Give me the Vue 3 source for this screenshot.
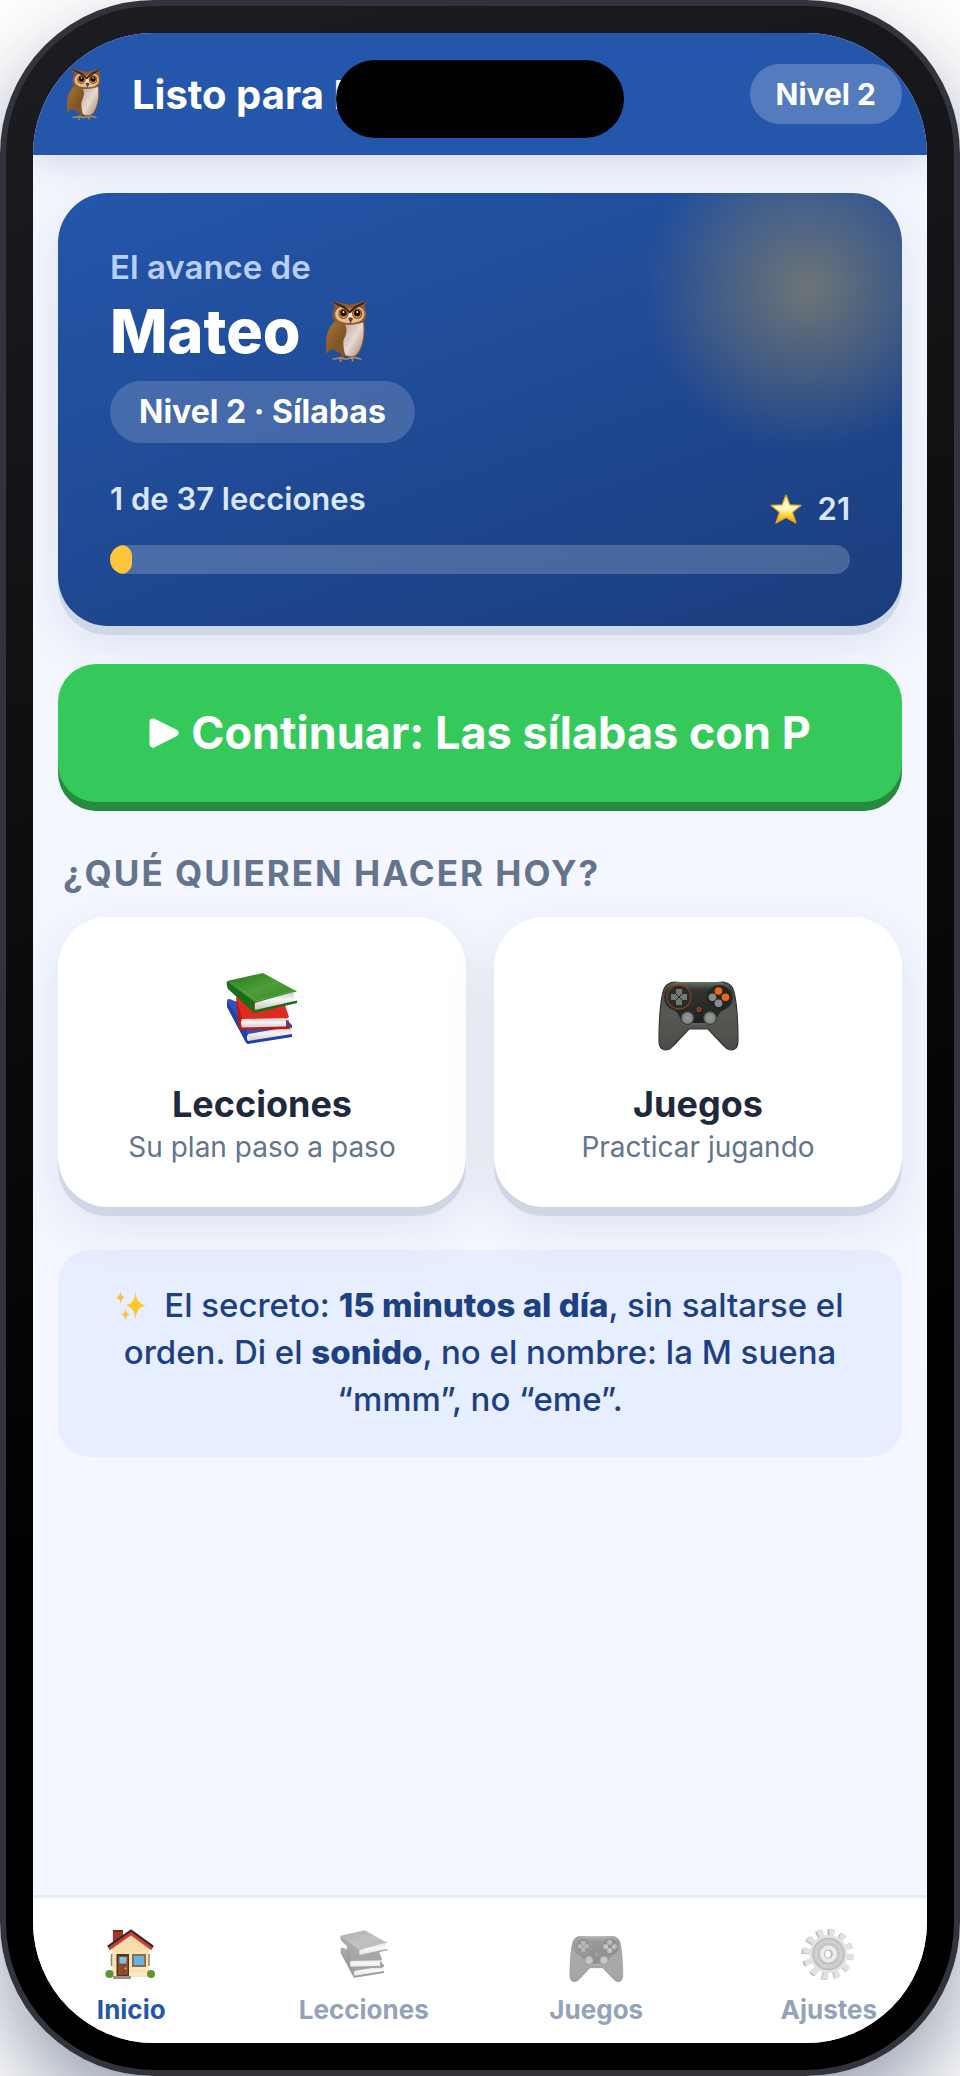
<script setup>
const lessonsDone = 1
const lessonsTotal = 37
const progress = Math.round((lessonsDone / lessonsTotal) * 100)

const tiles = [
  { icon: 'books', title: 'Lecciones', text: 'Su plan paso a paso' },
  { icon: 'gamepad', title: 'Juegos', text: 'Practicar jugando' },
]

const tabs = [
  { icon: 'house', label: 'Inicio', active: true },
  { icon: 'books', label: 'Lecciones', active: false },
  { icon: 'gamepad', label: 'Juegos', active: false },
  { icon: 'gear', label: 'Ajustes', active: false },
]
</script>

<template>
  <svg class="sprite" width="0" height="0" aria-hidden="true">
    <defs>
      <linearGradient id="wing" x1="0" y1="0" x2="1" y2="1">
        <stop offset="0" stop-color="#a87638" /><stop offset="1" stop-color="#6b421a" />
      </linearGradient>
      <linearGradient id="belly" x1="0" y1="0" x2="1" y2="1">
        <stop offset="0" stop-color="#b9a39a" /><stop offset=".5" stop-color="#e6dad4" /><stop offset="1" stop-color="#a98068" />
      </linearGradient>
      <linearGradient id="starFill" x1="0" y1="0" x2="0" y2="1">
        <stop offset="0" stop-color="#fff3b0" /><stop offset=".5" stop-color="#fffbd0" /><stop offset=".7" stop-color="#ffd83a" /><stop offset="1" stop-color="#f09a10" />
      </linearGradient>
      <linearGradient id="green" x1="0" y1="0" x2="1" y2="1">
        <stop offset="0" stop-color="#27791b" /><stop offset=".5" stop-color="#4d9d3a" /><stop offset="1" stop-color="#2f861f" />
      </linearGradient>
      <linearGradient id="pages" x1="0" y1="0" x2="0" y2="1">
        <stop offset="0" stop-color="#c9c9c9" /><stop offset=".4" stop-color="#f4f4f4" /><stop offset="1" stop-color="#c2c2c2" />
      </linearGradient>
      <linearGradient id="shell" x1="0" y1="0" x2="0" y2="1">
        <stop offset="0" stop-color="#4b4f4b" /><stop offset=".5" stop-color="#565853" /><stop offset="1" stop-color="#4c4d49" />
      </linearGradient>
      <linearGradient id="face" x1="0" y1="0" x2="0" y2="1">
        <stop offset="0" stop-color="#67706b" /><stop offset=".2" stop-color="#303330" /><stop offset="1" stop-color="#1f211f" />
      </linearGradient>
      <radialGradient id="stick">
        <stop offset="0" stop-color="#969b97" /><stop offset=".7" stop-color="#858a86" /><stop offset="1" stop-color="#5d625e" />
      </radialGradient>
      <linearGradient id="wall" x1="0" y1="0" x2="0" y2="1">
        <stop offset="0" stop-color="#f6d9a0" /><stop offset="1" stop-color="#fae8c2" />
      </linearGradient>
    </defs>

    <symbol id="owl" viewBox="0 0 36 52">
      <path d="M15 45V50M23 45V50" stroke="#7a5a38" stroke-width="2.500" />
      <path d="M7 49.500L13 48.500L17 49.500M18 49.500L24 48L30 49.500M13 48.500V51.500M23 48.500V51" fill="none" stroke="#a98a68" stroke-width="1.400" stroke-linecap="round" />
      <path d="M8 18C4 22 1 29 1 36V45L5 41L8 42L16 47C20 48 24 48 27 46C32 40 34 32 33 18Z" fill="#825728" />
      <path d="M17 20C16 28 14 38 17 46C20 48 24 47.500 27 45C32 38 33 28 32 19Z" fill="url(#belly)" />
      <path d="M8 18C3 23 1 29 1 36V45L4 41L7 42C13 38 18 32 18 25C18 19 12 16 8 18Z" fill="url(#wing)" />
      <path d="M5 1C11 2 17 3 20.500 4C25 3 30 2 35 1C34 4 33 5 33.500 7C36 13 34 19 28 20C20 22 10 21 7 16C5 12 7 8 8.500 6Z" fill="#8a5c36" />
      <path d="M20.500 8C17 3.500 10 5 8.500 11C8 17 14 20 21 19C28 20 33 17 33 11C32 5 25 4 20.500 8Z" fill="#e2bd94" />
      <path d="M15 5L20.500 10L27 5C24 8 24 13 24 15L21 18L18 15C18 11 17 7 15 5Z" fill="#f5e5d6" />
      <path d="M5 1C12 3 18 5 20.500 9C24 5 29 3 35 1C31 5 26 6 21.500 11H20C16 6 10 5 5 1Z" fill="#432416" />
      <circle cx="15.500" cy="11.500" r="4.300" fill="#7a3909" /><circle cx="27" cy="11.500" r="4.300" fill="#7a3909" />
      <circle cx="15.500" cy="11.500" r="3.600" fill="#e88b0d" /><circle cx="27" cy="11.500" r="3.600" fill="#e88b0d" />
      <circle cx="15.500" cy="11" r="2.700" fill="#0d0805" /><circle cx="27" cy="11" r="2.700" fill="#0d0805" />
      <circle cx="15.500" cy="10" r=".8" fill="#fff" /><circle cx="27" cy="10" r=".8" fill="#fff" />
      <path d="M19.300 15.500Q21.500 13.500 23.500 15.500L21.500 19.500Z" fill="#5d4337" />
    </symbol>

    <symbol id="star" viewBox="0 0 32 30">
      <path d="M16 1L19.800 10.800L31 11.400L22.500 18.300L26 29L16 23.500L6 29L9.500 18.300L1 11.400L12.200 10.800Z" fill="url(#starFill)" stroke="#e9a520" stroke-width="1.200" stroke-linejoin="round" />
    </symbol>

    <symbol id="sparkles" viewBox="0 0 30 30">
      <path d="M19.500 0Q20.200 13 30 14.500Q20.200 16 19.500 29Q18.800 16 9.500 14.500Q18.800 13 19.500 0Z" fill="#fbc92d" />
      <path d="M4.500 0Q5 5.700 9 6.500Q5 7.300 4.500 13Q4 7.300 0 6.500Q4 5.700 4.500 0Z" fill="#f9bb45" />
      <path d="M9.500 17Q10 22.700 14 23.500Q10 24.300 9.500 30Q9 24.300 5 23.500Q9 22.700 9.500 17Z" fill="#f9c345" />
    </symbol>

    <symbol id="books" viewBox="0 0 90 90">
      <g transform="translate(10 7)">
        <path d="M0 28Q2 26 5 28L60 48L65 53V56L21 64Z" fill="#3150c4" />
        <path d="M21 62L62 55L64 56V65L22 71Z" fill="url(#pages)" />
        <path d="M0 28L21 61Q19 66 21 69L65 62V65L21 72Q19 72 18 69L0 35Z" fill="#2140a8" />
        <path d="M9 25L58 33L62 45L59 47L14 48Z" fill="#e02a20" />
        <path d="M14 47L59 46V55L14 57Z" fill="url(#pages)" />
        <path d="M9 25L15 46Q13 51 15 55.500L60 54.500L61 46L63 57L14 58Q12 57 11 50Z" fill="#bd1913" />
        <path d="M0 9L36 1L70 19.500L28 31Z" fill="url(#green)" />
        <path d="M28 31L67 20V30L28 39Z" fill="url(#pages)" />
        <path d="M0 9L28 30Q26 35 28 38L70 28.500V31L28 41Q26 41 24 38L1 17Q-1 13 0 9Z" fill="#1c6d17" />
        <path d="M4 10L30 29L69 18" fill="none" stroke="#62ad4f" stroke-width=".6" />
      </g>
    </symbol>

    <symbol id="gamepad" viewBox="0 0 90 90">
      <g transform="translate(5 16)">
        <path d="M16 1Q40 4 65 1Q74 2 76 11C79 23 80 45 80 60Q80 68 74 69Q69 69 66 65L50 48H31L15 65Q12 69 7 69Q1 68 1 60C1 45 2 23 5 11Q7 2 16 1Z" fill="url(#shell)" stroke="#343633" stroke-width="1.200" />
        <path d="M18 1H63Q74 4 75 16Q75 25 66 29Q61 31 59 37Q57 44 51 43L47 42H34L30 43Q24 44 22 37Q20 31 15 29Q6 25 6 16Q7 4 18 1Z" fill="url(#face)" />
        <circle cx="21" cy="16" r="12" fill="#292c29" stroke="#80401c" stroke-width="1.300" />
        <path d="M18 8H24V13H29V19H24V24H18V19H13V13H18Z" fill="#727873" />
        <path d="M17.500 12.500L24.500 19.500M24.500 12.500L17.500 19.500" stroke="#252725" stroke-width="1" />
        <circle cx="61" cy="16" r="12" fill="#242624" />
        <circle cx="60.500" cy="10" r="3.800" fill="#f26412" /><circle cx="67.500" cy="16.300" r="3.800" fill="#f26412" />
        <circle cx="54.500" cy="16.300" r="3.800" fill="#8a8c8b" /><circle cx="60.500" cy="22.300" r="3.800" fill="#8a8c8b" />
        <circle cx="41" cy="28.500" r="2.400" fill="#a94b18" /><circle cx="41" cy="28.500" r="1" fill="#49200c" />
        <circle cx="29.500" cy="37" r="6.500" fill="url(#stick)" stroke="#393d3a" /><circle cx="52" cy="37" r="6.500" fill="url(#stick)" stroke="#393d3a" />
        <path d="M33 43H48" stroke="#6c716d" stroke-width="1" />
      </g>
    </symbol>

    <symbol id="house" viewBox="0 0 60 60">
      <g transform="translate(5 4)">
        <path d="M7 1H17V8L7 17Z" fill="#ad3329" /><path d="M7 1H17V3H7Z" fill="#7e201a" />
        <path d="M6 17L25 3L43 17V48H6Z" fill="url(#wall)" />
        <path d="M7 30H42M7 36H42M7 42H42M14 22H36" stroke="#ecd3a0" stroke-width=".6" />
        <path d="M2 18L25 2L47 18" fill="none" stroke="#2c2b30" stroke-width="3" />
        <path d="M3 20L25 4.500L46 20" fill="none" stroke="#d53d30" stroke-width="3" />
        <path d="M5.500 25V37M43 25V37" stroke="#9a8468" stroke-width="1.500" />
        <path d="M10.500 25H23V48H10.500Z" fill="#563022" /><path d="M12 27H22V46H12Z" fill="#8c4a2d" />
        <path d="M13.500 28H20.500V34.500H13.500Z" fill="#79c0e8" /><circle cx="19.500" cy="39.500" r="1" fill="#f5be33" />
        <path d="M26 25H40V38H26Z" fill="#8a6d4f" /><path d="M28 27H38V36H28Z" fill="#68b2e2" />
        <circle cx="3.500" cy="45" r="4" fill="#5d952f" /><circle cx="45" cy="45" r="4" fill="#5d952f" />
        <path d="M7 47H25V50H7Z" fill="#99918a" />
      </g>
    </symbol>

    <symbol id="gear" viewBox="0 0 60 60">
      <circle cx="28" cy="29.500" r="21.500" fill="none" stroke="#6e6e6e" stroke-width="8" stroke-dasharray="5 6.260" />
      <circle cx="29.500" cy="29" r="21.500" fill="none" stroke="#c4c4c4" stroke-width="8" stroke-dasharray="5.500 5.760" />
      <circle cx="29.500" cy="29" r="19" fill="#c6c6c6" />
      <circle cx="29.500" cy="29" r="15.500" fill="#9b9b9b" stroke="#777" stroke-width="1.500" />
      <circle cx="29.500" cy="29" r="12" fill="#8b8b8b" stroke="#adadad" />
      <circle cx="29.500" cy="29" r="8.500" fill="#dadada" />
      <circle cx="29.500" cy="29" r="4.500" fill="#777" /><ellipse cx="29" cy="29" rx="2.700" ry="3.500" fill="#fff" />
    </symbol>
  </svg>

  <div class="phone">
    <div class="island"></div>
    <div class="screen">
      <header class="topbar">
        <svg class="brand-owl" aria-hidden="true"><use href="#owl" /></svg>
        <h1 class="brand">Listo para Leer</h1>
        <span class="level">Nivel 2</span>
      </header>

      <main class="content">
        <section class="hero">
          <p class="hero-kicker">El avance de</p>
          <h2 class="hero-name">Mateo <svg class="hero-owl" aria-hidden="true"><use href="#owl" /></svg></h2>
          <span class="hero-level">Nivel 2 · Sílabas</span>
          <div class="stats">
            <span>{{ lessonsDone }} de {{ lessonsTotal }} lecciones</span>
            <span class="stars"><svg class="star" aria-hidden="true"><use href="#star" /></svg>21</span>
          </div>
          <div class="track"><div class="fill" :style="{ width: progress + '%' }"></div></div>
        </section>

        <button class="continue" type="button">
          <svg class="play" viewBox="0 0 30 30" aria-hidden="true"><path d="M4 4L26 15L4 26Z" fill="#fff" stroke="#fff" stroke-width="7" stroke-linejoin="round" /></svg>
          Continuar: Las sílabas con P
        </button>

        <h2 class="question">¿QUÉ QUIEREN HACER HOY?</h2>

        <div class="tiles">
          <button v-for="tile in tiles" :key="tile.title" class="tile" type="button">
            <svg class="tile-icon" aria-hidden="true"><use :href="'#' + tile.icon" /></svg>
            <span class="tile-title">{{ tile.title }}</span>
            <span class="tile-text">{{ tile.text }}</span>
          </button>
        </div>

        <p class="tip"><svg class="sparkles" aria-hidden="true"><use href="#sparkles" /></svg> El secreto: <strong>15 minutos al día</strong>, sin saltarse el orden. Di el <strong>sonido</strong>, no el nombre: la M suena “mmm”, no “eme”.</p>
      </main>

      <nav class="tabs">
        <a v-for="tab in tabs" :key="tab.label" href="#" class="tab" :class="{ active: tab.active }">
          <svg class="tab-icon" aria-hidden="true"><use :href="'#' + tab.icon" /></svg>
          <span>{{ tab.label }}</span>
        </a>
      </nav>
    </div>
  </div>
</template>

<style>
body {
  background: #fff;
}
</style>

<style scoped>
h1, h2, p {
  margin: 0;
}
button {
  border: 0;
  font-family: inherit;
  cursor: pointer;
}
.sprite {
  position: absolute;
}
.phone {
  position: relative;
  box-sizing: border-box;
  display: flex;
  min-height: 100vh;
  padding: 27px;
  border: 6px solid #33333d;
  border-radius: 154px;
  background: linear-gradient(165deg, #1c1d21, #000 70%);
  box-shadow: 0 40px 90px rgba(20, 40, 75, 0.45);
  font-family: Inter, "Liberation Sans", sans-serif;
  color: #1e293b;
}
.island {
  position: absolute;
  z-index: 2;
  top: 54px;
  left: 50%;
  width: 288px;
  height: 78px;
  margin-left: -144px;
  border-radius: 39px;
  background: #000;
}
.screen {
  flex: 1;
  min-width: 0;
  display: flex;
  flex-direction: column;
  overflow: hidden;
  border-radius: 121px;
  background: #f4f7ff;
}
.topbar {
  position: relative;
  display: flex;
  align-items: center;
  box-sizing: border-box;
  height: 122px;
  padding: 0 25px 0 33px;
  background: #2456ab;
  box-shadow: 0 6px 36px rgba(30, 41, 80, 0.16);
  color: #fff;
}
.brand-owl {
  width: 36px;
  height: 52px;
}
.brand {
  flex: 1;
  margin-left: 30px;
  font-size: 40px;
  font-weight: 700;
  white-space: nowrap;
}
.level {
  padding: 0 26px;
  border-radius: 30px;
  background: rgba(255, 255, 255, 0.22);
  font-size: 30px;
  font-weight: 700;
  line-height: 60px;
}
.content {
  flex: 1;
  padding: 38px 25px;
}
.hero {
  padding: 52px;
  border-radius: 50px;
  background:
    radial-gradient(circle 164px at right 95px top 95px, rgba(255, 197, 61, 0.35), rgba(255, 197, 61, 0)),
    linear-gradient(160deg, #2456ab, #1b3d7d);
  box-shadow: 0 9px 0 #cfd7e7, 0 18px 54px rgba(30, 50, 100, 0.11);
  color: #fff;
}
.hero-kicker {
  color: #b9cff8;
  font-size: 33px;
  font-weight: 600;
  line-height: 44px;
}
.hero-name {
  display: flex;
  align-items: center;
  gap: 24px;
  margin-top: 4px;
  font-size: 61px;
  font-weight: 800;
  line-height: 76px;
}
.hero-owl {
  width: 43px;
  height: 62px;
}
.hero-level {
  display: inline-block;
  margin-top: 12px;
  padding: 0 29px;
  border-radius: 31px;
  background: rgba(255, 255, 255, 0.17);
  font-size: 32px;
  font-weight: 700;
  line-height: 62px;
}
.stats {
  display: flex;
  justify-content: space-between;
  height: 48px;
  margin-top: 37px;
  color: #dbe7ff;
  font-size: 31px;
  font-weight: 600;
  line-height: 38px;
}
.stars {
  display: flex;
  align-items: center;
  align-self: flex-end;
  gap: 16px;
}
.star {
  width: 32px;
  height: 30px;
}
.track {
  overflow: hidden;
  height: 29px;
  margin-top: 17px;
  border-radius: 15px;
  background: rgba(255, 255, 255, 0.2);
}
.fill {
  height: 100%;
  border-radius: 15px;
  background: #ffc53d;
}
.continue {
  display: flex;
  align-items: center;
  justify-content: center;
  gap: 12px;
  width: 100%;
  margin-top: 38px;
  padding: 0 24px;
  border-radius: 38px;
  background: #35c95b;
  box-shadow: 0 9px 0 #258b3f;
  color: #fff;
  font-size: 45px;
  font-weight: 700;
  line-height: 138px;
}
.play {
  width: 30px;
  height: 30px;
}
.question {
  margin: 49px 5px 22px;
  color: #64748b;
  font-size: 35px;
  font-weight: 700;
  letter-spacing: 2px;
  line-height: 44px;
}
.tiles {
  display: grid;
  grid-template-columns: 1fr 1fr;
  gap: 28px;
}
.tile {
  display: flex;
  flex-direction: column;
  align-items: center;
  padding: 48px 24px 39px;
  border-radius: 50px;
  background: #fff;
  box-shadow: 0 9px 0 #cfd7e7, 0 18px 54px rgba(30, 50, 100, 0.1);
}
.tile-icon {
  width: 90px;
  height: 90px;
}
.tile-title {
  margin-top: 27px;
  color: #1e293b;
  font-size: 36px;
  font-weight: 700;
  line-height: 44px;
}
.tile-text {
  color: #64748b;
  font-size: 28px;
  line-height: 42px;
}
.tip {
  margin-top: 43px;
  padding: 32px 48px 34px;
  border-radius: 32px;
  background: #e7eeff;
  color: #1d4083;
  font-size: 33px;
  font-weight: 500;
  line-height: 47px;
  text-align: center;
}
.tip strong {
  font-weight: 800;
}
.sparkles {
  width: 30px;
  height: 30px;
  margin-right: 9px;
  vertical-align: -4px;
}
.tabs {
  display: grid;
  grid-template-columns: repeat(4, 1fr);
  gap: 36px;
  padding: 27px 0 17px;
  border-top: 3px solid #e5edf5;
  background: #fff;
}
.tab {
  display: flex;
  flex-direction: column;
  align-items: center;
  gap: 9px;
  color: #94a3b8;
  font-size: 26px;
  font-weight: 700;
  line-height: 32px;
  text-decoration: none;
}
.tab-icon {
  width: 60px;
  height: 60px;
  filter: grayscale(1);
  opacity: 0.5;
}
.tab.active {
  color: #2456ab;
}
.tab.active .tab-icon {
  filter: none;
  opacity: 1;
}
</style>
